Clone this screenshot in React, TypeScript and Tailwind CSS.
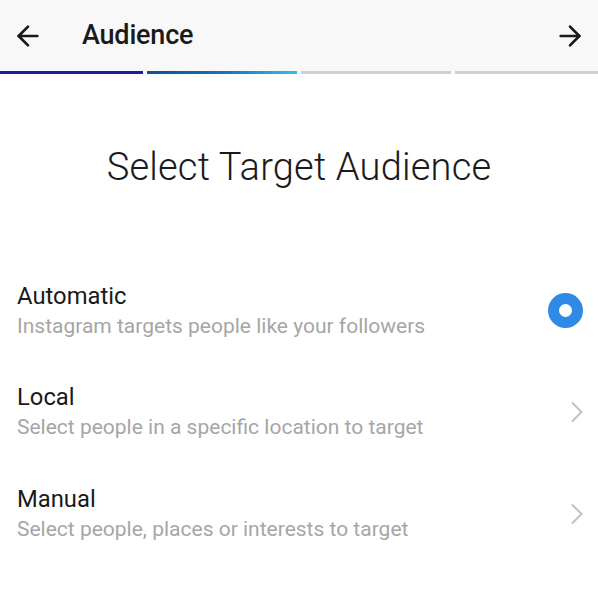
import { ArrowLeft, ArrowRight, ChevronRight } from 'lucide-react';

const options = [
  { title: 'Automatic', subtitle: 'Instagram targets people like your followers', selected: true },
  { title: 'Local', subtitle: 'Select people in a specific location to target', selected: false },
  { title: 'Manual', subtitle: 'Select people, places or interests to target', selected: false },
];

export default function App() {
  return (
    <div className="w-[598px] h-[593px] bg-white overflow-hidden font-['Roboto',sans-serif]">
      {/* Top bar */}
      <div className="bg-[#f8f8f8] h-[71px] flex items-center px-[12px]">
        <ArrowLeft className="w-[32px] h-[32px] text-[#1a1a1a]" strokeWidth={2} />
        <span className="ml-[38px] text-[27px] font-medium text-[#1a1a1a] tracking-[-0.2px]">Audience</span>
        <ArrowRight className="w-[32px] h-[32px] text-[#1a1a1a] ml-auto" strokeWidth={2} />
      </div>

      {/* Step progress */}
      <div className="flex gap-[4px] h-[3px] bg-[#f8f8f8]">
        <div className="w-[143px] bg-[#1c1caa]" />
        <div className="w-[150px] bg-gradient-to-r from-[#114f8f] via-[#1a6fbf] to-[#2ec0f2]" />
        <div className="w-[150px] bg-[#d0d0d0]" />
        <div className="flex-1 bg-[#d0d0d0]" />
      </div>

      <h1 className="mt-[65px] text-center text-[38px] font-light text-[#1a1a1a] tracking-[0.2px]">
        Select Target Audience
      </h1>

      <div className="mt-[64px]">
        {options.map((o) => (
          <div key={o.title} className="flex items-center h-[101.5px] pl-[17px] pr-[15px]">
            <div className="flex-1">
              <div className="text-[23.8px] text-[#1a1a1a] leading-[30px]">{o.title}</div>
              <div className="text-[21px] text-[#a6a6a6] leading-[30px]">{o.subtitle}</div>
            </div>
            {o.selected ? (
              <div className="w-[35px] h-[35px] rounded-full bg-[#2f8ae6] flex items-center justify-center">
                <div className="w-[13px] h-[13px] rounded-full bg-white" />
              </div>
            ) : (
              <ChevronRight className="w-[36px] h-[36px] text-[#c2c2c2] mr-[-12px]" strokeWidth={1.4} />
            )}
          </div>
        ))}
      </div>
    </div>
  );
}
